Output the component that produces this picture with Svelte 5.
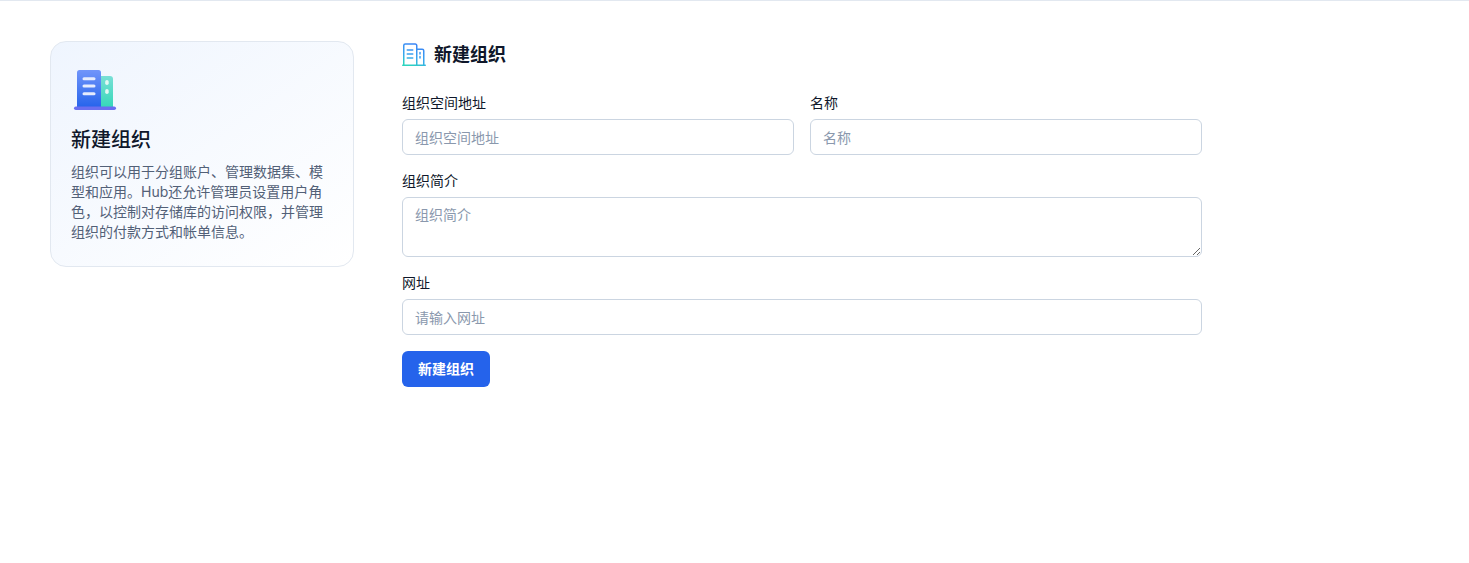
<script>
  const comma = '\uFF0C';
  const intro = `组织可以用于分组账户、管理数据集、模型和应用。Hub还允许管理员设置用户角色${comma}以控制对存储库的访问权限${comma}并管理组织的付款方式和帐单信息。`;
</script>

<div class="page">
  <aside class="card">
    <svg class="hero" width="48" height="48" viewBox="0 0 48 48" aria-hidden="true">
      <defs>
        <linearGradient id="hb" x1="0" y1="0" x2="0" y2="1">
          <stop offset="0" stop-color="#7195fa"/>
          <stop offset="1" stop-color="#2563eb"/>
        </linearGradient>
        <linearGradient id="hg" x1="0" y1="0" x2="0" y2="1">
          <stop offset="0" stop-color="#79dfd6"/>
          <stop offset="1" stop-color="#34d8b8"/>
        </linearGradient>
      </defs>
      <path d="M6 8.500a2.500 2.500 0 0 1 2.500-2.500h19a2.500 2.500 0 0 1 2.500 2.500V44H6z" fill="url(#hb)"/>
      <path d="M30 12h9a3 3 0 0 1 3 3v29H30z" fill="url(#hg)"/>
      <rect x="3" y="42.500" width="42" height="3.500" rx="1.750" fill="#6a6ff0"/>
      <rect x="11.500" y="13.200" width="13" height="3" rx="1.500" fill="#e6ecfd"/>
      <rect x="11.500" y="20.500" width="13" height="3" rx="1.500" fill="#e6ecfd"/>
      <rect x="11.500" y="28.200" width="13" height="3" rx="1.500" fill="#e6ecfd"/>
      <rect x="34.200" y="16" width="3.500" height="5" rx="1.750" fill="#e3f8f4"/>
      <rect x="34.200" y="25" width="3.500" height="5" rx="1.750" fill="#e3f8f4"/>
    </svg>
    <h2>新建组织</h2>
    <p>{intro}</p>
  </aside>

  <form class="form" onsubmit={(e) => e.preventDefault()}>
    <div class="heading">
      <svg width="24" height="24" viewBox="0 0 24 24" fill="none" aria-hidden="true">
        <defs>
          <linearGradient id="ic" x1="0.700" y1="0" x2="0.300" y2="1">
            <stop offset="0" stop-color="#3b82f6"/>
            <stop offset="0.650" stop-color="#38a8ee"/>
            <stop offset="1" stop-color="#2dd4bf"/>
          </linearGradient>
        </defs>
        <path d="M0.750 22.250h22.500M1.750 22V2.500A1.500 1.500 0 0 1 3.250 1h10A1.500 1.500 0 0 1 14.750 2.500V22M14.750 6.250h5.500A1.500 1.500 0 0 1 21.750 7.750V22M5.250 7h5.500M5.250 11h5.500M5.250 15h5.500M18 9.500v1.500M18 13.500v1.500" stroke="url(#ic)" stroke-width="1.500" stroke-linecap="round" stroke-linejoin="round"/>
      </svg>
      <h1>新建组织</h1>
    </div>

    <div class="row">
      <label class="field">
        <span>组织空间地址</span>
        <input placeholder="组织空间地址" />
      </label>
      <label class="field">
        <span>名称</span>
        <input placeholder="名称" />
      </label>
    </div>

    <label class="field">
      <span>组织简介</span>
      <textarea placeholder="组织简介"></textarea>
    </label>

    <label class="field">
      <span>网址</span>
      <input placeholder="请输入网址" />
    </label>

    <button type="submit">新建组织</button>
  </form>
</div>

<style>
  :global(body) {
    margin: 0;
    background: #fff;
    font-family: Inter, "Noto Sans CJK SC", sans-serif;
    color: #0f172a;
  }
  .page {
    display: flex;
    align-items: flex-start;
    gap: 48px;
    padding: 40px 50px;
    border-top: 1px solid #e2e8f0;
    height: 563px;
    box-sizing: border-box;
  }
  .card {
    width: 304px;
    height: 226px;
    box-sizing: border-box;
    flex: none;
    padding: 22px 20px 20px;
    border: 1px solid #e2e8f0;
    border-radius: 16px;
    background: linear-gradient(145deg, #eff5fe 0%, #ffffff 100%);
  }
  .hero { display: block; }
  h2 {
    margin: 14px 0 0;
    font-size: 20px;
    line-height: 28px;
    font-weight: 500;
    color: #0f172a;
  }
  p {
    margin: 8px 0 0;
    font-size: 14px;
    line-height: 20px;
    color: #526077;
  }
  .form {
    width: 800px;
    display: flex;
    flex-direction: column;
    gap: 14px;
    align-items: flex-start;
  }
  .heading {
    display: flex;
    align-items: center;
    gap: 8px;
    height: 28px;
    margin-bottom: 8px;
  }
  h1 {
    margin: 0;
    font-size: 18px;
    line-height: 28px;
    font-weight: 600;
    color: #0f172a;
  }
  .row {
    width: 100%;
    display: flex;
    gap: 16px;
  }
  .field {
    flex: 1;
    width: 100%;
    display: flex;
    flex-direction: column;
    gap: 4px;
    font-size: 14px;
    line-height: 24px;
    color: #0f172a;
  }
  input, textarea {
    width: 100%;
    box-sizing: border-box;
    font: inherit;
    font-size: 14px;
    line-height: 20px;
    padding: 7px 12px;
    border: 1px solid #cbd5e1;
    border-radius: 6px;
    background: #fff;
    color: #0f172a;
    margin: 0;
    display: block;
    outline: none;
  }
  input { height: 36px; }
  textarea { height: 60px; resize: vertical; }
  input::placeholder, textarea::placeholder { color: #8a98ad; opacity: 1; }
  button {
    margin-top: 2px;
    width: 88px;
    height: 36px;
    padding: 0 0 2px;
    border: 0;
    border-radius: 6px;
    background: #2563eb;
    color: #fff;
    font: inherit;
    font-size: 14px;
    font-weight: 600;
  }
</style>
